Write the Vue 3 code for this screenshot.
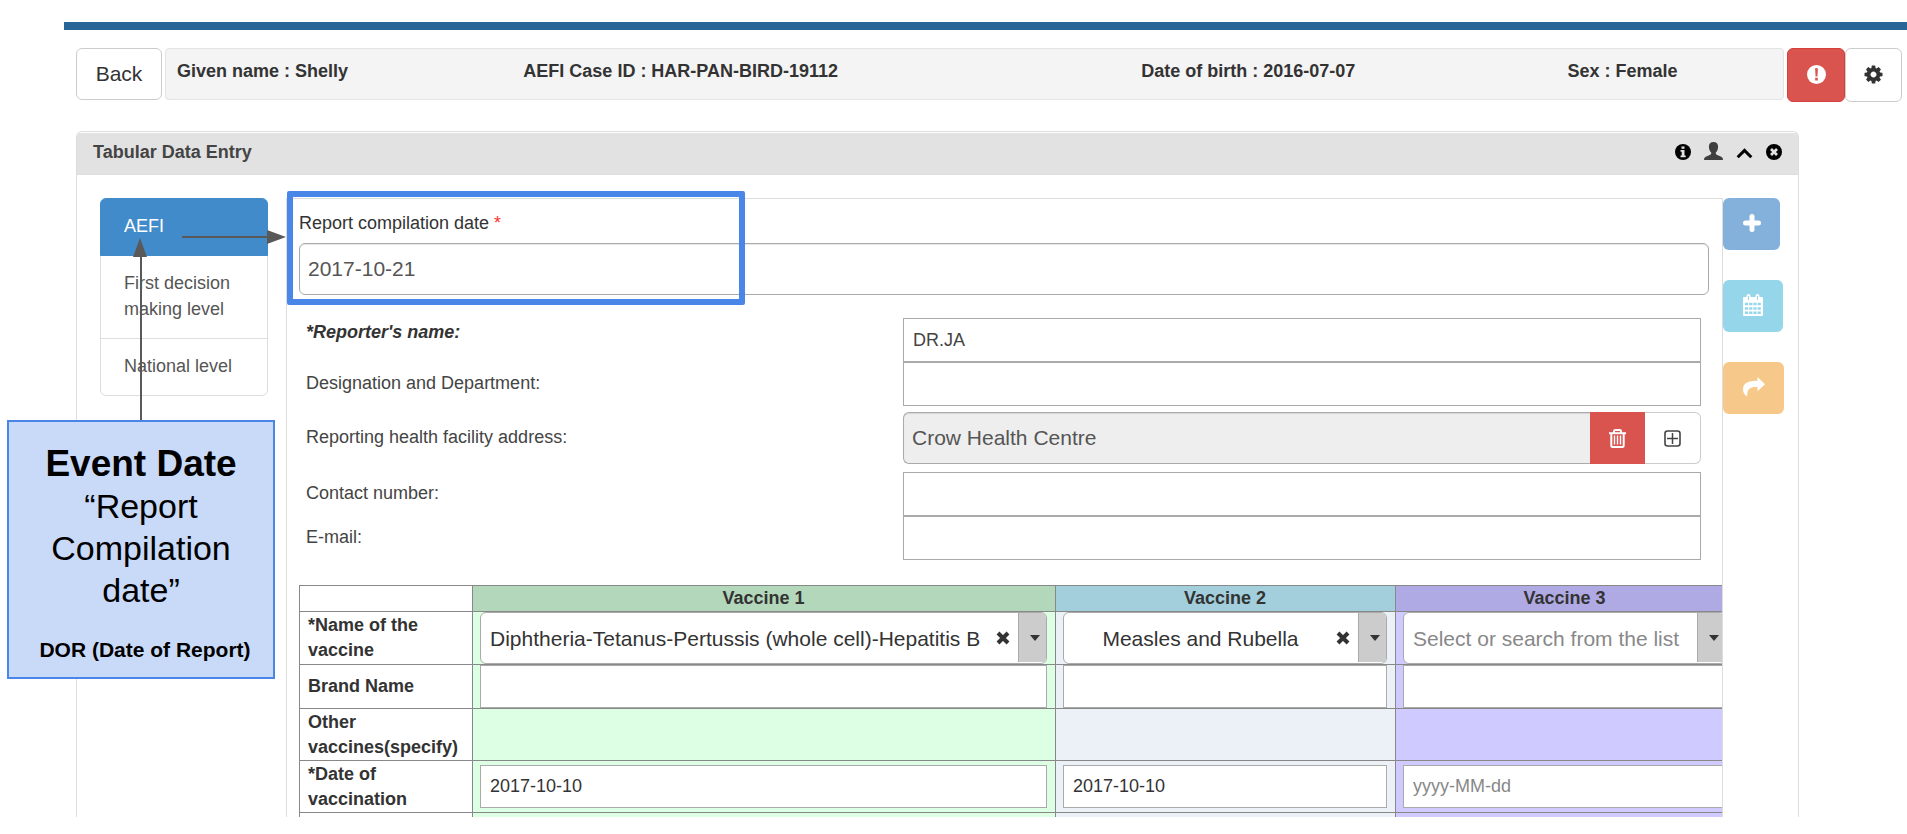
<script setup>
import { ref } from 'vue'

const profile = [
  'Given name : Shelly',
  'AEFI Case ID : HAR-PAN-BIRD-19112',
  'Date of birth : 2016-07-07',
  'Sex : Female',
]

const stages = ['AEFI', 'First decision making level', 'National level']
const activeStage = ref('AEFI')
const reportDate = ref('2017-10-21')

const reporter = ref('DR.JA')
const designation = ref('')
const facility = ref('Crow Health Centre')
const contact = ref('')
const email = ref('')

const vaccines = ref([
  { key: 'v1', title: 'Vaccine 1', name: 'Diphtheria-Tetanus-Pertussis (whole cell)-Hepatitis B', brand: '', date: '2017-10-10' },
  { key: 'v2', title: 'Vaccine 2', name: 'Measles and Rubella', brand: '', date: '2017-10-10' },
  { key: 'v3', title: 'Vaccine 3', name: '', brand: '', date: '' },
])
const vaccineOptions = [
  'Diphtheria-Tetanus-Pertussis (whole cell)-Hepatitis B',
  'Measles and Rubella',
]
</script>

<template>
  <div class="page">
    <div class="rule"></div>

    <header class="topline">
      <button class="btn back" type="button">Back</button>
      <div class="profile">
        <span v-for="p in profile" :key="p">{{ p }}</span>
      </div>
      <div class="tools">
        <button class="btn danger" type="button" aria-label="Alerts">
          <svg width="19" height="19" viewBox="0 0 20 20">
            <circle cx="10" cy="10" r="10" fill="#fff" />
            <path d="M8.500 3.500h3l-.5 8.500h-2z M8.600 13.500h2.800v2.700h-2.800z" fill="#d9534f" />
          </svg>
        </button>
        <button class="btn" type="button" aria-label="Settings">
          <svg width="21" height="21" viewBox="0 0 1792 1792">
            <path fill="#333" d="M1152 896q0-106-75-181t-181-75-181 75-75 181 75 181 181 75 181-75 75-181zm512-109v222q0 12-8 23t-20 13l-185 28q-19 54-39 91 35 50 107 138 10 12 10 25t-9 23q-27 37-99 108t-94 71q-12 0-26-9l-138-108q-44 23-91 38-16 136-29 186-7 28-36 28h-222q-14 0-24.500-8.500t-11.500-21.500l-28-184q-49-16-90-37l-141 107q-10 9-25 9-14 0-25-11-126-114-165-168-7-10-7-23 0-12 8-23 15-21 51-66.500t54-70.500q-27-50-41-99l-183-27q-13-2-21-12.500t-8-23.500v-222q0-12 8-23t19-13l186-28q14-46 39-92-40-57-107-138-10-12-10-24 0-10 9-23 26-36 98.500-107.500t94.500-71.500q13 0 26 10l138 107q44-23 91-38 16-136 29-186 7-28 36-28h222q14 0 24.500 8.500t11.500 21.500l28 184q49 16 90 37l142-107q9-9 24-9 13 0 25 10 129 119 165 170 7 8 7 22 0 12-8 23-15 21-51 66.500t-54 70.500q26 50 41 98l183 28q13 2 21 12.500t8 23.500z" />
          </svg>
        </button>
      </div>
    </header>

    <section class="panel">
      <div class="panel-head">
        <h2>Tabular Data Entry</h2>
        <div class="panel-icons">
          <button type="button" aria-label="Information">
            <svg width="16" height="16" viewBox="0 0 16 16">
              <circle cx="8" cy="8" r="8" />
              <path d="M6.500 2.500h3v2.200h-3z M5.500 6h4v5.500h1.200v1.700H5.500v-1.700h1.200V7.700H5.500z" fill="#e2e2e2" />
            </svg>
          </button>
          <button type="button" aria-label="Person">
            <svg class="person" width="19" height="18" viewBox="0 0 19 18">
              <path fill="#3f3f3f" d="M9.500 0c3 0 4.600 2 4.600 4.800 0 2.400-.9 4.500-2.300 5.700v1.300c.3.900 1.400 1.300 3.200 2 2.600.9 4 1.500 4 4.200H0c0-2.700 1.400-3.300 4-4.200 1.800-.7 2.900-1.100 3.200-2v-1.300C5.800 9.300 4.900 7.200 4.900 4.800 4.900 2 6.500 0 9.500 0z" />
            </svg>
          </button>
          <button type="button" aria-label="Collapse">
            <svg width="17" height="16" viewBox="0 0 17 16">
              <path d="M1.700 13.200l6.800-6.800 6.800 6.800" fill="none" stroke="#000" stroke-width="3" />
            </svg>
          </button>
          <button type="button" aria-label="Close">
            <svg width="16" height="16" viewBox="0 0 16 16">
              <circle cx="8" cy="8" r="8" />
              <path d="M5 5l6 6M11 5l-6 6" stroke="#e2e2e2" stroke-width="2.700" />
            </svg>
          </button>
        </div>
      </div>

      <div class="panel-body">
        <nav class="stages">
          <button
            v-for="s in stages"
            :key="s"
            type="button"
            :class="{ active: s === activeStage }"
            @click="activeStage = s"
          >{{ s }}</button>
        </nav>

        <div class="content">
          <div class="highlight"></div>
          <label class="date-label" for="report-date">Report compilation date <span>*</span></label>
          <input id="report-date" v-model="reportDate" class="field large" type="text" />

          <div class="form">
            <div class="line">
              <label class="required" for="reporter">*Reporter's name:</label>
              <input id="reporter" v-model="reporter" class="field square" type="text" />
            </div>
            <div class="line">
              <label for="designation">Designation and Department:</label>
              <input id="designation" v-model="designation" class="field square" type="text" />
            </div>
            <div class="line facility">
              <label for="facility">Reporting health facility address:</label>
              <div class="group">
                <input id="facility" v-model="facility" class="field large" type="text" readonly />
                <button class="trash" type="button" aria-label="Remove facility">
                  <svg width="17" height="19" viewBox="0 0 17 19" fill="none" stroke="#fff">
                    <path d="M0 4.200h17" stroke-width="2" />
                    <path d="M5 4V2.300Q5 1 6.300 1h4.400Q12 1 12 2.300V4M2.300 5v11.500Q2.300 18 3.800 18h9.400q1.500 0 1.500-1.500V5" stroke-width="2" />
                    <path d="M5.500 6.500v9M8.500 6.500v9M11.500 6.500v9" stroke-width="1.400" />
                  </svg>
                </button>
                <button class="add" type="button" aria-label="Choose facility">
                  <svg width="17" height="17" viewBox="0 0 17 17" fill="none" stroke="#444">
                    <rect x="1" y="1" width="15" height="15" rx="2.500" stroke-width="1.600" />
                    <path d="M8.500 3v11M3 8.500h11" stroke-width="1.500" />
                  </svg>
                </button>
              </div>
            </div>
            <div class="line">
              <label for="contact">Contact number:</label>
              <input id="contact" v-model="contact" class="field square" type="text" />
            </div>
            <div class="line">
              <label for="email">E-mail:</label>
              <input id="email" v-model="email" class="field square" type="text" />
            </div>
          </div>

          <table class="vaccines">
            <colgroup>
              <col class="c0" /><col class="c1" /><col class="c2" /><col class="c3" />
            </colgroup>
            <thead>
              <tr>
                <td></td>
                <th v-for="v in vaccines" :key="v.key" scope="col" :class="v.key">{{ v.title }}</th>
              </tr>
            </thead>
            <tbody>
              <tr class="tall">
                <th scope="row">*Name of the vaccine</th>
                <td v-for="v in vaccines" :key="v.key" :class="v.key">
                  <div class="picker">
                    <select v-model="v.name" :aria-label="v.title + ' name'" :class="{ empty: !v.name }">
                      <option value="">Select or search from the list</option>
                      <option v-for="o in vaccineOptions" :key="o" :value="o">{{ o }}</option>
                    </select>
                    <button v-if="v.name" type="button" aria-label="Clear" @click="v.name = ''">
                      <svg width="14" height="14" viewBox="0 0 14 14">
                        <path d="M2 2l10 10M12 2L2 12" stroke="#333" stroke-width="4" />
                      </svg>
                    </button>
                    <span class="arrow"></span>
                  </div>
                </td>
              </tr>
              <tr class="brand">
                <th scope="row">Brand Name</th>
                <td v-for="v in vaccines" :key="v.key" :class="v.key">
                  <input v-model="v.brand" class="field square cell" type="text" :aria-label="v.title + ' brand name'" />
                </td>
              </tr>
              <tr class="tall">
                <th scope="row">Other vaccines(specify)</th>
                <td v-for="v in vaccines" :key="v.key" :class="v.key"></td>
              </tr>
              <tr class="tall">
                <th scope="row">*Date of vaccination</th>
                <td v-for="v in vaccines" :key="v.key" :class="v.key">
                  <input v-model="v.date" class="field square cell" type="text" placeholder="yyyy-MM-dd" :aria-label="v.title + ' date'" />
                </td>
              </tr>
              <tr class="tall">
                <td></td>
                <td v-for="v in vaccines" :key="v.key" :class="v.key"></td>
              </tr>
            </tbody>
          </table>
        </div>

        <div class="actions">
          <button class="blue" type="button" aria-label="Add">
            <svg width="18" height="18" viewBox="0 0 18 18">
              <path d="M9 2.500v13M2.500 9h13" stroke="#fff" stroke-width="5" stroke-linecap="round" />
            </svg>
          </button>
          <button class="cyan" type="button" aria-label="Schedule">
            <svg width="22" height="22" viewBox="0 0 22 22">
              <path fill="#fff" d="M2 3h18q1 0 1 1v17q0 1-1 1H2q-1 0-1-1V4q0-1 1-1z" />
              <path d="M6.500 2v3M15.500 2v3" stroke="#fff" stroke-width="4" stroke-linecap="round" />
              <path d="M6.500 2v4M15.500 2v4" stroke="#96d6ea" stroke-width="1" />
              <path d="M3 10h16M3 14.500h16M3 18.700h16" stroke="#96d6ea" stroke-width="2.600" stroke-dasharray="3.200 1" />
            </svg>
          </button>
          <button class="orange" type="button" aria-label="Refer">
            <svg width="22" height="20" viewBox="0 0 22 20">
              <path fill="#fff" d="M14.500 0l7.500 7.200-7.500 7v-4.100C8 9.800 3.900 11 4.200 19.500 1.200 18 0 15 0 12 0 6 5.500 3.700 14.500 3.700z" />
            </svg>
          </button>
        </div>
      </div>
    </section>

    <svg class="connectors" width="300" height="424" viewBox="0 0 300 424">
      <path d="M141 422V250M182 237h90" stroke="#595959" stroke-width="2" />
      <path d="M140 238l7 19h-14zM286 237l-19-7v14z" fill="#595959" />
    </svg>
    <aside class="note">
      <strong>Event Date</strong>
      <p>“Report Compilation date”</p>
      <b>DOR (Date of Report)</b>
    </aside>
  </div>
</template>

<style>
body {
  margin: 0;
  background: #fff;
}
</style>

<style scoped>
* {
  box-sizing: border-box;
}
.page {
  position: relative;
  display: flex;
  flex-direction: column;
  height: calc(100vh - 17px);
  padding-top: 22px;
  overflow: hidden;
  font: 18px/26px "Liberation Sans", Arial, sans-serif;
  color: #333;
}
button,
input,
select {
  margin: 0;
  font: inherit;
  color: inherit;
}
button {
  display: flex;
  align-items: center;
  justify-content: center;
  padding: 0;
  border: 0;
  background: none;
  cursor: pointer;
}
svg {
  display: block;
}
.rule {
  flex: none;
  height: 8px;
  margin-left: 64px;
  background: #276696;
}
.topline {
  display: flex;
  align-items: flex-start;
  flex: none;
  margin: 18px 5px 0 76px;
}
.btn {
  width: 57px;
  height: 54px;
  padding-bottom: 2px;
  border: 1px solid #ccc;
  border-radius: 6px;
  background: #fff;
}
.btn.back {
  width: 86px;
  height: 52px;
  padding-bottom: 0;
  font-size: 21px;
}
.btn.danger {
  width: 58px;
  border-color: #d43f3a;
  background: #d9534f;
}
.profile {
  display: grid;
  grid-template-columns: 347fr 619fr 427fr 216fr;
  flex: 1;
  height: 52px;
  margin: 0 3px;
  padding: 9px 0 0 11px;
  border: 1px solid #e3e3e3;
  border-radius: 4px;
  background: #f4f4f4;
  font-weight: bold;
}
.tools {
  display: flex;
}
.panel {
  display: flex;
  flex-direction: column;
  flex: 1;
  min-height: 0;
  margin: 29px 108px 0 76px;
  padding-top: 1px;
  border: 1px solid #ddd;
  border-bottom: 0;
  border-radius: 6px 6px 0 0;
}
.panel-head {
  display: flex;
  flex: none;
  justify-content: space-between;
  height: 42px;
  padding: 6px 16px 0;
  border-bottom: 1px solid #ddd;
  border-radius: 4px 4px 0 0;
  background: #e2e2e2;
}
.panel-head h2 {
  margin: 0;
  font: inherit;
  font-weight: bold;
  color: #444;
}
.panel-icons {
  display: flex;
  gap: 13px;
  height: 26px;
}
.person {
  margin-bottom: 2px;
}
.panel-body {
  display: flex;
  align-items: stretch;
  flex: 1;
  min-height: 0;
  padding: 23px 14px 0 23px;
}
.stages {
  width: 168px;
  margin-right: 18px;
}
.stages button {
  display: block;
  width: 100%;
  margin-bottom: -1px;
  padding: 14px 23px 16px;
  border: 1px solid #ddd;
  text-align: left;
  color: #555;
}
.stages button:first-child {
  border-radius: 6px 6px 0 0;
}
.stages button:last-child {
  border-radius: 0 0 6px 6px;
}
.stages .active {
  position: relative;
  z-index: 1;
  border-color: #428bca;
  background: #428bca;
  color: #fff;
}
.content {
  position: relative;
  flex: 1;
  min-width: 0;
  padding: 11px 13px 0 12px;
  border: 1px solid #ddd;
  border-bottom: 0;
  overflow-x: clip;
}
.highlight {
  position: absolute;
  top: -8px;
  left: 0;
  width: 458px;
  height: 114px;
  border: 6px solid #4a86e8;
  border-radius: 2px;
  pointer-events: none;
}
.date-label {
  display: block;
  margin-bottom: 7px;
}
.date-label span {
  color: #f33;
}
.field {
  display: block;
  width: 100%;
  border: 1px solid #aaa;
  background: #fff;
}
.large {
  height: 52px;
  padding: 0 8px;
  border-radius: 6px;
  box-shadow: inset 0 1px 1px rgba(0, 0, 0, 0.1);
  font-size: 21px;
  color: #555;
}
.square {
  height: 44px;
  padding: 0 9px;
}
.form {
  margin: 23px 8px 25px 7px;
  color: #444;
}
.line {
  display: grid;
  grid-template-columns: 597fr 798fr;
  align-items: center;
}
.line label {
  padding-bottom: 2px;
}
.line .required {
  padding-bottom: 16px;
  font-weight: bold;
  font-style: italic;
  color: #333;
}
.facility {
  margin: 6px 0 8px;
}
.group {
  display: flex;
}
.group .field {
  flex: 1;
  min-width: 0;
  border-right: 0;
  border-radius: 6px 0 0 6px;
  background: #eee;
}
.trash {
  width: 55px;
  background: #d9534f;
}
.add {
  width: 56px;
  border: 1px solid #ccc;
  border-left: 0;
  border-radius: 0 6px 6px 0;
}
.vaccines {
  width: 1435px;
  border-collapse: collapse;
  border: 1px solid #333;
  table-layout: fixed;
  line-height: 25px;
}
.c0 {
  width: 173px;
}
.c1 {
  width: 583px;
}
.c2 {
  width: 340px;
}
.c3 {
  width: 339px;
}
.vaccines td,
.vaccines th {
  height: 26px;
  padding: 0 8px 0 7px;
  border: 1px solid #888;
}
.vaccines th[scope='row'] {
  padding: 0;
  padding-left: 8px;
  text-align: left;
}
.vaccines .tall > * {
  height: 52px;
}
.vaccines .brand > * {
  height: 44px;
}
th.v1 {
  background: #b3d7bb;
}
th.v2 {
  background: #a3cfdd;
}
th.v3 {
  background: #b0aae4;
}
td.v1 {
  background: #ddffe3;
}
td.v2 {
  background: #ebf1f6;
}
td.v3 {
  background: #cfcaff;
}
.cell {
  height: 43px;
}
.cell::placeholder {
  color: #888;
}
.picker {
  display: flex;
  height: 52px;
  border: 1px solid #aaa;
  border-radius: 6px;
  background: #fff;
  overflow: hidden;
}
.picker select {
  flex: 1;
  min-width: 0;
  padding: 0 0 0 9px;
  border: 0;
  appearance: none;
  background: transparent;
  font-size: 21px;
}
.v2 .picker select {
  text-align-last: center;
}
.picker .empty {
  color: #888;
}
.picker button {
  width: 30px;
}
.picker .arrow {
  display: flex;
  align-items: center;
  justify-content: center;
  width: 28px;
  height: 49px;
  padding-left: 4px;
  border-left: 1px solid #aaa;
  background: #ccc;
}
.arrow::after {
  content: "";
  border: 5px solid transparent;
  border-top: 6px solid #333;
  border-bottom: 0;
}
.actions {
  display: flex;
  flex-direction: column;
  align-items: flex-start;
  gap: 30px;
  width: 61px;
}
.actions button {
  height: 52px;
  padding-bottom: 3px;
  border-radius: 6px;
}
.blue {
  width: 57px;
  background: #84b1db;
}
.cyan {
  width: 60px;
  background: #96d6ea;
}
.orange {
  width: 61px;
  background: #f6c98b;
}
.connectors {
  position: absolute;
  z-index: 2;
  top: 0;
  left: 0;
  pointer-events: none;
}
.note {
  position: absolute;
  z-index: 3;
  top: 420px;
  left: 7px;
  width: 268px;
  padding: 21px 20px 14px;
  border: 2px solid #4a86e8;
  background: #c9daf8;
  text-align: center;
  color: #000;
}
.note strong {
  display: block;
  font-size: 37px;
  line-height: 42px;
}
.note p {
  margin: 0 0 26px;
  font-size: 34px;
  line-height: 42px;
}
.note b {
  display: block;
  padding-left: 8px;
  font-size: 21px;
  line-height: 26px;
  white-space: nowrap;
}
</style>
